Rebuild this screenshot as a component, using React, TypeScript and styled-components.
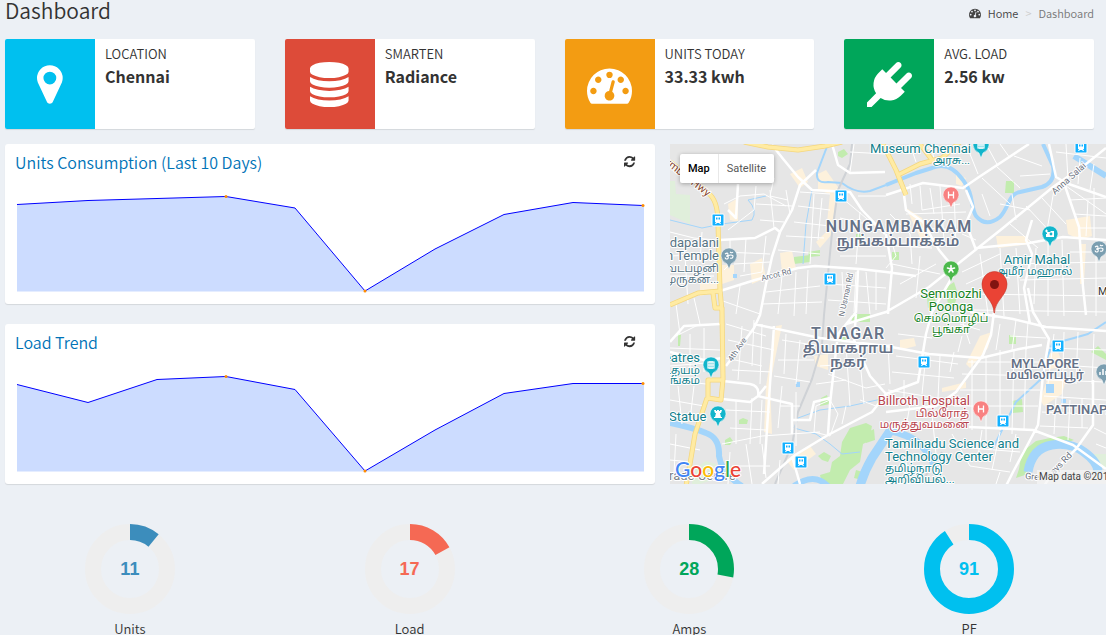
import React from 'react';
import styled, { createGlobalStyle } from 'styled-components';

const GlobalStyle = createGlobalStyle`
  *, *::before, *::after { box-sizing: border-box; }
  html { background: #ecf0f5; }
  body {
    margin: 0;
    background: #ecf0f5;
    color: #333;
    font-family: 'Noto Sans CJK SC', 'Open Sans', sans-serif;
    font-size: 13px;
    font-weight: 350;
    line-height: 20px;
    overflow-x: hidden;
  }
  h1, h2, p, ol, dl, dd { margin: 0; padding: 0; }
`;

const Page = styled.main`
  display: flex;
  flex-direction: column;
`;

const Header = styled.header`
  display: flex;
  justify-content: space-between;
  height: 39px;
  padding: 0 12px 0 5px;
`;

const Title = styled.h1`
  font-size: 21px;
  font-weight: 350;
  line-height: 20px;
`;

const Crumbs = styled.ol`
  display: flex;
  align-items: center;
  height: 26px;
  list-style: none;
  font-size: 11px;
  color: #777;
`;

const Crumb = styled.li`
  display: flex;
  align-items: center;
  & + &::before {
    content: '>';
    padding: 0 7px;
    color: #ccc;
  }
`;

const CrumbLink = styled.a`
  display: flex;
  align-items: center;
  gap: 7px;
  color: #444;
  text-decoration: none;
`;

const FourColumns = styled.section`
  display: grid;
  grid-template-columns: repeat(4, minmax(0, 1fr));
  gap: 30px;
  padding: 0 12px 0 5px;
`;

const InfoBox = styled.article`
  display: flex;
  min-height: 90px;
  background: #fff;
  border-radius: 2px;
  box-shadow: 0 1px 1px rgba(0, 0, 0, 0.1);
  overflow: hidden;
`;

const InfoIcon = styled.div<{ $color: string }>`
  display: flex;
  align-items: center;
  justify-content: center;
  flex: 0 0 90px;
  background: ${(p) => p.$color};
  color: #fff;
`;

const InfoBody = styled.div`
  padding: 5px 10px;
`;

const InfoLabel = styled.p`
  font-size: 13px;
  line-height: 20px;
  text-transform: uppercase;
`;

const InfoValue = styled.p`
  font-size: 16px;
  font-weight: 700;
  line-height: 25px;
`;

const Middle = styled.section`
  display: grid;
  grid-template-columns: minmax(0, 650fr) minmax(0, 436fr);
  gap: 15px;
  padding: 15px 0 0 5px;
`;

const Panels = styled.div`
  display: flex;
  flex-direction: column;
  gap: 20px;
`;

const Panel = styled.article`
  background: #fff;
  border-radius: 3px;
  box-shadow: 0 1px 1px rgba(0, 0, 0, 0.1);
  padding: 10px;
`;

const PanelHead = styled.div`
  display: flex;
  justify-content: space-between;
  align-items: flex-start;
  height: 18px;
`;

const PanelTitle = styled.h2`
  font-size: 16px;
  font-weight: 350;
  line-height: 16px;
  color: #0073b7;
`;

const RefreshButton = styled.button`
  display: flex;
  border: 0;
  padding: 2px 10px;
  background: none;
  color: #333;
  cursor: pointer;
`;

const Sparkline = styled.svg`
  display: block;
  width: 100%;
  height: 100px;
  margin-top: 22px;
`;

const MapFrame = styled.div`
  position: relative;
  min-height: 340px;
  background: #e5e5e5;
  overflow: hidden;
  font-family: Roboto, sans-serif;
`;

const MapDrawing = styled.svg`
  display: block;
  width: 100%;
  height: 340px;
  font-family: Roboto, 'Noto Sans Tamil', sans-serif;
`;

const MapSwitch = styled.div`
  position: absolute;
  top: 10px;
  left: 10px;
  display: flex;
  background: #fff;
  border-radius: 2px;
  box-shadow: 0 1px 4px rgba(0, 0, 0, 0.3);
`;

const MapButton = styled.button<{ $active?: boolean }>`
  height: 29px;
  padding: 0 8px;
  border: 0;
  border-right: ${(p) => (p.$active ? '1px solid #e8e8e8' : '0')};
  background: none;
  color: ${(p) => (p.$active ? '#000' : '#565656')};
  font-family: Roboto, sans-serif;
  font-size: 11px;
  font-weight: ${(p) => (p.$active ? 500 : 400)};
  cursor: pointer;
`;

const MapCredit = styled.div`
  position: absolute;
  left: 367px;
  bottom: 0;
  padding: 0 2px;
  background: rgba(245, 245, 245, 0.7);
  color: #444;
  font-size: 10px;
  font-weight: 400;
  line-height: 14px;
  white-space: nowrap;
`;

const Gauge = styled.figure`
  display: flex;
  flex-direction: column;
  align-items: center;
  gap: 9px;
  margin: 0;
  padding-top: 40px;
`;

const GaugeDial = styled.div<{ $color: string }>`
  display: grid;
  place-items: center;
  width: 90px;
  height: 90px;
  color: ${(p) => p.$color};
  & > * { grid-area: 1 / 1; }
`;

const GaugeValue = styled.span`
  font: bold 18px/20px 'Liberation Sans', Arial, sans-serif;
`;

const GaugeLabel = styled.figcaption`
  font-size: 13px;
  line-height: 12px;
`;

/* Icon outlines on a 1792-unit em */
const ICONS = {
  marker: {
    w: 1024,
    d: 'M768 640q0-106-75-181t-181-75-181 75-75 181 75 181 181 75 181-75 75-181zm256 0q0 109-33 179l-364 774q-16 33-47.5 52t-67.5 19-67.5-19-46.5-52l-365-774q-33-70-33-179 0-212 150-362t362-150 362 150 150 362z',
  },
  database: {
    w: 1536,
    d: 'M768 768q237 0 443-43t325-127v170q0 69-103 128t-280 93.5-385 34.5-385-34.5-280-93.5-103-128v-170q119 84 325 127t443 43zm0 768q237 0 443-43t325-127v170q0 69-103 128t-280 93.5-385 34.5-385-34.5-280-93.5-103-128v-170q119 84 325 127t443 43zm0-384q237 0 443-43t325-127v170q0 69-103 128t-280 93.5-385 34.5-385-34.5-280-93.5-103-128v-170q119 84 325 127t443 43zm0-1152q208 0 385 34.5t280 93.5 103 128v128q0 69-103 128t-280 93.5-385 34.5-385-34.5-280-93.5-103-128v-128q0-69 103-128t280-93.5 385-34.5z',
  },
  gauge: {
    w: 1792,
    d: 'M384 1152q0-53-37.5-90.5t-90.5-37.5-90.5 37.5-37.5 90.5 37.5 90.5 90.5 37.5 90.5-37.5 37.5-90.5zm192-448q0-53-37.5-90.5t-90.5-37.5-90.5 37.5-37.5 90.5 37.5 90.5 90.5 37.5 90.5-37.5 37.5-90.5zm428 481l101-382q6-26-7.5-48.5t-38.5-29.5-48 6.5-30 39.5l-101 382q-60 5-107 43.5t-63 98.5q-20 77 20 146t117 89 146-20 89-117q16-60-6-117t-72-91zm660-33q0-53-37.5-90.5t-90.5-37.5-90.5 37.5-37.5 90.5 37.5 90.5 90.5 37.5 90.5-37.5 37.5-90.5zm-640-640q0-53-37.5-90.5t-90.5-37.5-90.5 37.5-37.5 90.5 37.5 90.5 90.5 37.5 90.5-37.5 37.5-90.5zm448 192q0-53-37.5-90.5t-90.5-37.5-90.5 37.5-37.5 90.5 37.5 90.5 90.5 37.5 90.5-37.5 37.5-90.5zm320 448q0 261-141 483-19 29-54 29h-1402q-35 0-54-29-141-221-141-483 0-182 71-348t191-286 286-191 348-71 348 71 286 191 191 286 71 348z',
  },
  plug: {
    w: 1792,
    d: 'M1755 453q37 38 37 90.5t-37 90.5l-401 400 150 150-160 160q-163 163-389.5 186.5t-411.5-100.5l-362 362h-181v-181l362-362q-124-185-100.5-411.5t186.5-389.5l160-160 150 150 400-401q38-37 91-37t90 37 37 90.5-37 90.5l-400 401 234 234 401-400q38-37 91-37t90 37z',
  },
  refresh: {
    w: 1536,
    d: 'M1511 928q0 5-1 7-64 268-268 434.5t-478 166.5q-146 0-282.5-55t-243.5-157l-129 129q-19 19-45 19t-45-19-19-45v-448q0-26 19-45t45-19h448q26 0 45 19t19 45-19 45l-137 137q71 66 161 102t187 36q134 0 250-65t186-179q11-17 53-117 8-23 30-23h192q13 0 22.5 9.5t9.5 22.5zm25-800v448q0 26-19 45t-45 19h-448q-26 0-45-19t-19-45 19-45l138-138q-148-137-349-137-134 0-250 65t-186 179q-11 17-53 117-8 23-30 23h-199q-13 0-22.5-9.5t-9.5-22.5v-7q65-268 270-434.5t480-166.5q146 0 284 55.5t245 156.5l130-129q19-19 45-19t45 19 19 45z',
  },
};

type IconName = keyof typeof ICONS;

function Icon({ name, size }: { name: IconName; size: number }) {
  const icon = ICONS[name];
  return (
    <svg
      height={size}
      width={(size * icon.w) / 1792}
      viewBox={`0 0 ${icon.w} 1792`}
      fill="currentColor"
      overflow="visible"
      aria-hidden="true"
    >
      <path d={icon.d} />
    </svg>
  );
}

const INFO: { icon: IconName; color: string; label: string; value: string }[] = [
  { icon: 'marker', color: '#00c0ef', label: 'Location', value: 'Chennai' },
  { icon: 'database', color: '#dd4b39', label: 'Smarten', value: 'Radiance' },
  { icon: 'gauge', color: '#f39c12', label: 'Units Today', value: '33.33 kwh' },
  { icon: 'plug', color: '#00a65a', label: 'Avg. Load', value: '2.56 kw' },
];

type Point = [number, number];

const CHARTS: { title: string; points: Point[] }[] = [
  {
    title: 'Units Consumption (Last 10 Days)',
    points: [[2, 10.5], [73, 6.5], [142, 4.5], [211, 2.5], [280, 14], [350, 97], [420, 55], [489, 20.5], [558, 8.5], [628, 11.5]],
  },
  {
    title: 'Load Trend',
    points: [[2, 10.5], [73, 28.5], [142, 5.5], [211, 2.5], [280, 15.5], [350, 97], [420, 56], [489, 19.5], [558, 9.5], [628, 9.5]],
  },
];

const GAUGES = [
  { value: 11, label: 'Units', color: '#3c8dbc' },
  { value: 17, label: 'Load', color: '#f56954' },
  { value: 28, label: 'Amps', color: '#00a65a' },
  { value: 91, label: 'PF', color: '#00c0ef' },
];

function Chart({ title, points }: { title: string; points: Point[] }) {
  const line = points.map((p) => p.join(',')).join(' ');
  const spots = [points[3], points[5], points[9]];
  return (
    <Sparkline viewBox="0 0 630 100" preserveAspectRatio="none" role="img" aria-label={title}>
      <polygon points={`${line} 629,11 629,97.5 2,97.5`} fill="#ccdcff" />
      <polyline points={line} fill="none" stroke="#00f" strokeWidth="1" vectorEffect="non-scaling-stroke" />
      {spots.map(([x, y]) => (
        <circle key={x} cx={x} cy={y} r="1.5" fill="#ff8c00" />
      ))}
    </Sparkline>
  );
}

/* ---- Map artwork, in map pixels ---- */

const PARKS = [
  'M180 284L196 279L202 282L199 297L193 300L190 318L180 326L173 340H152L150 331L160 328L162 318L170 312L172 298Z',
  'M194 290L204 285L205 296L196 299Z', 'M186 326L196 329L192 336L184 334Z',
  'M148 312L154 308L161 312L158 318L152 316Z', 'M69 276L73 274L78 276L77 280H69Z',
  'M55 296L60 293L63 297L60 301H55Z', 'M151 254L157 251L160 260L150 262Z',
  'M124 113L140 111V118L124 120Z', 'M138 108L150 106V112L139 113Z', 'M168 8L174 5L178 10L172 14L168 12Z',
  'M336 37H344V49H335Z', 'M275 144L284 138L288 150L284 162L278 160Z', 'M257 154L264 150L266 160L258 164Z',
  'M339 191L346 192V200L339 200Z', 'M421 208L428 202L436 210V216Z', 'M342 257L352 255L353 268L342 269Z',
  'M349 325L352 308L366 297L380 294L394 292L404 296L395 299L380 298L368 303L360 316L358 330L346 334Z',
  'M182 170H200V178H182Z', 'M222 108H229V116H222Z', 'M8 190L11 191L10 202H8Z', 'M186 90H193V98H186Z', 'M170 193H178V198H170Z',
];
const PALE_PARKS = ['M0 37H5L6 50L20 51V80L0 71Z', 'M22 326L36 317L46 320V335L30 340H22Z', 'M417 310H436V325L420 320Z'];

const PEACH = [
  'M52 121H64V136L52 140Z', 'M80 120L92 114L96 134L82 140Z', 'M110 109L122 107L126 124L112 128Z', 'M30 138H48V148L30 152Z',
  'M148 30L156 26L170 46L160 50L148 46Z', 'M160 50L166 48L162 90L150 104L146 98L156 88Z', 'M120 30L132 24L138 38L130 44Z',
  'M106 182L112 181L106 210L100 240L102 290L94 288L96 242Z', 'M144 212L158 210V226L146 222Z', 'M116 316L140 302L146 310L124 326Z',
  'M396 76L420 72L422 92L410 96L398 90Z', 'M326 92H356L360 100L328 104Z', 'M236 64L252 74L262 100L254 102Z',
  'M272 244L296 238V244L272 248Z', 'M378 234L396 236L392 250L374 262L370 256Z', 'M230 196L244 194L246 202L230 206Z',
  'M310 192L322 188L318 204L300 224L296 220Z', 'M376 210L388 208L394 222L376 226Z', 'M58 60L68 54L68 78L60 76Z',
  'M286 30L296 34L292 42L286 40Z', 'M410 100L416 100L414 140L410 140Z',
];

const RIVERS = [
  { w: 4, d: 'M216 41L246 29L262 24C276 18 286 26 293 36C304 50 300 62 306 72Q316 84 330 73C340 62 338 50 350 48L372 43Q386 38 383 22L373 0' },
  { w: 2, d: 'M158 0L147 29Q146 40 158 38L172 39Q186 50 200 47L216 41' },
  { w: 6, d: 'M0 279Q24 284 36 289Q50 294 49 312Q52 330 72 342' },
  { w: 9, d: 'M222 284Q210 302 202 314Q194 328 190 342' },
  { w: 7, d: 'M216 286Q240 290 252 302T266 330' },
  { w: 6, d: 'M124 342Q144 328 158 342' },
  { w: 9, d: 'M358 328Q362 304 382 301Q400 298 414 308T428 328' },
  { w: 6, d: 'M404 12L436 32' },
  { w: 1, d: 'M0 76L32 84L52 80L82 76Q88 66 78 56L96 52' },
  { w: 1, d: 'M142 46L136 80L133 120' },
  { w: 2, d: 'M436 178L418 190L404 194L382 200L370 236L346 258L332 286L322 306' },
  { w: 1, d: 'M216 254L180 262L150 266L128 274L124 284L146 290L160 300L172 310L190 308' },
];

const MINOR = [
  'M54 60L70 52L94 50L116 62', 'M58 86L84 66L86 42', 'M60 96V120L54 126', 'M76 94L74 128', 'M96 92L92 128L70 132',
  'M54 108L100 110', 'M64 120L100 118', 'M100 46L104 84', 'M116 46L120 70', 'M86 60L122 62', 'M90 76L114 78', 'M104 34L100 52L118 56',
  'M130 48L160 50', 'M128 62L160 66', 'M124 78L160 82', 'M116 92L154 94', 'M108 106L150 110', 'M144 50L140 120', 'M152 54L148 96',
  'M50 156L90 170', 'M70 142L66 170', 'M96 148L150 142', 'M92 160L152 158', 'M112 132L108 170', 'M126 128L124 172', 'M138 126L136 170',
  'M172 54L208 84', 'M170 74L196 80', 'M166 96L216 102', 'M170 112L216 112', 'M172 128L174 168', 'M186 128L184 168', 'M196 128L200 170',
  'M160 140L216 144', 'M158 156L216 160', 'M206 126V166', 'M190 68L186 120', 'M180 8L216 10', 'M184 0L180 28', 'M188 52L216 52',
  'M0 88L24 94L46 96', 'M14 96L18 160', 'M0 112L46 110', 'M32 88L30 118', 'M0 132L44 132', 'M6 160L10 190', 'M24 154L30 180L6 192',
  'M0 204L50 206', 'M20 190V230', 'M34 184V228', 'M0 236L36 240', 'M0 222L48 218', 'M8 242L12 280', 'M0 256L34 262', 'M24 242L20 276',
  'M56 180L96 192', 'M58 196L104 206', 'M56 214L92 222', 'M62 226L102 228', 'M72 182L68 236', 'M84 176L82 222', 'M92 180L90 240',
  'M56 266L100 268', 'M60 284L96 286', 'M66 256V300', 'M82 254L80 300', 'M92 256L90 300', 'M52 300L92 292L150 288',
  'M112 196L150 202', 'M108 216L144 216', 'M104 232L140 238', 'M116 190L114 230', 'M130 196L126 240', 'M112 242L108 284', 'M126 248V302',
  'M110 262L130 262', 'M146 240L176 236', 'M158 230L196 244L215 240', 'M150 222L180 220', 'M176 200L180 262', 'M190 216L194 260',
  'M146 262L144 288L160 292L168 270L160 256L146 262', 'M176 262L172 280', 'M190 256L206 262', 'M60 308L58 340', 'M76 300L82 340',
  'M92 300L96 334', 'M62 322L100 322', 'M110 316L108 340', 'M0 300L30 306', 'M6 290L4 330', 'M0 316L22 318',
  'M240 40L242 60', 'M250 42L252 66L290 60', 'M260 44L264 70', 'M270 42L274 96', 'M236 70L296 68', 'M248 84L296 86', 'M220 70L240 90L242 120',
  'M216 80L226 112L216 124', 'M226 102L262 104', 'M222 120L270 130', 'M230 140L266 120', 'M250 112L246 154', 'M284 48L286 100', 'M292 90L306 96',
  'M240 0L246 18', 'M260 0L264 14', 'M226 6L260 4', 'M296 0L308 30', 'M316 0L328 22', 'M330 0L340 14', 'M312 34L340 60', 'M326 22L350 44',
  'M344 12L372 22', 'M350 32L380 30', 'M312 50L320 72', 'M330 60L360 66', 'M342 50L346 76', 'M340 80L368 104', 'M356 62L384 92',
  'M372 54L396 80', 'M384 46L376 92', 'M396 42L436 70', 'M400 56L436 54', 'M404 70L436 72', 'M408 84L436 84', 'M424 44V96', 'M418 56L416 92',
  'M386 8L436 14', 'M396 0L398 36', 'M410 14L408 40', 'M424 20L420 46', 'M292 128L330 110', 'M296 140L318 130L340 134',
  'M310 110L318 170', 'M330 104L334 172', 'M346 104L350 170', 'M378 96V172', 'M392 96L394 172', 'M426 98V172', 'M302 150L436 152',
  'M340 120L436 118', 'M350 136L436 134', 'M304 166L436 168', 'M400 108L436 108', 'M366 104L364 160', 'M290 170L300 200',
  'M218 200L220 240', 'M228 190L262 194', 'M226 212L288 220', 'M222 228L284 234', 'M256 210L252 250', 'M270 212L268 254', 'M284 208L280 228',
  'M218 246L280 256', 'M234 236V262', 'M290 180L310 186', 'M292 192L288 208', 'M292 230L370 232', 'M298 218L372 218', 'M290 246L370 246',
  'M284 262L368 262', 'M302 216V286', 'M316 212V300', 'M330 206V286', 'M344 206L342 290', 'M356 204L354 286', 'M330 180L326 206',
  'M346 176L342 206', 'M358 178L356 206', 'M340 192L376 194', 'M384 190L378 240', 'M394 188L392 260', 'M408 188L406 240', 'M424 190L422 240',
  'M378 204L436 206', 'M376 220L436 224', 'M376 236L436 238', 'M374 252L436 256', 'M372 268L422 270', 'M370 282L418 284', 'M386 254L384 290',
  'M400 256L398 296', 'M412 254V284', 'M282 290L300 322L340 328', 'M312 286L308 312', 'M330 288L322 326', 'M346 290L340 318', 'M300 304L350 308',
  'M240 260L236 284', 'M262 270L266 310', 'M424 284L436 290', 'M426 300L436 304', 'M270 322L266 340', 'M236 318L240 340', 'M330 328L326 340',
];

const MAJOR = [
  'M102 1L114 16L128 33L142 46L180 48L192 66L215 90',
  'M146 26L130 41L122 66L110 88L102 113L96 140L90 171L84 184L56 222',
  'M50 96L85 94L105 84L110 88',
  'M50 147L85 136L128 124L145 122L190 125L216 128L246 132',
  'M162 0L168 21L180 29L215 28',
  'M436 4L416 20L383 43L333 84L289 119L259 143L216 168L176 180',
  'M92 340L125 311L158 291L202 268L216 250L248 238L256 190L262 168L284 130',
  'M0 198L14 182L50 180', 'M84 180L150 194L216 202L259 210L311 214L349 205L372 201',
  'M324 168L321 191L313 211L286 248L266 262L216 268',
  'M358 144L363 168L379 195L373 231L368 281L359 298L343 328L336 342',
  'M300 168L343 175L376 183L436 187', 'M299 283L363 286L403 301L436 325', 'M423 236V281L406 305L383 328L374 342',
  'M234 51L236 66L253 78L269 106L283 123', 'M216 51L253 39L293 44L309 33L359 0',
  'M379 0L386 33L396 39L436 53', 'M296 46L303 63L296 79L306 106', 'M306 104L359 99L393 93L436 96',
  'M362 76L356 96L362 110L354 144L360 180', 'M394 39L409 83L413 143L416 171',
  'M53 237L80 240Q90 242 88 252L80 258L52 255', 'M96 242L88 252L122 260L122 290', 'M122 276L140 276L144 258L160 254',
  'M54 214L34 216L0 208', 'M188 126L186 168L168 190L164 224L160 260L158 290', 'M186 170L184 196L200 232L216 250',
  'M58 66L66 74L68 40', 'M122 312L130 340', 'M216 90L222 124L218 170', 'M104 182L100 240L94 330',
];

const RAIL = ['M182 0L180 20L168 46L162 89L154 171L152 201L142 235L128 268L122 301L105 340', 'M272 308L250 340'];

const HIGHWAYS = [
  'M0 18L16 30L38 49Q48 56 48 79L50 146L52 168L53 235L51 256L38 254V236H53', 'M37 254L25 290L20 320L16 342',
  'M0 161L28 149L50 147', 'M43 149L45 164H52V180', 'M74 -2L98 3L128 6L155 2L172 -2',
  'M211 -4L226 26L236 51', 'M228 31L250 20L272 14L290 -2', 'M250 0L262 16',
];

const TRAINS: Point[] = [[48, 76], [171, 52], [160, 135], [254, 218], [388, 202], [333, 277], [118, 304], [131, 318], [411, 3]];

type PinKind = 'om' | 'camera' | 'cinema' | 'tower' | 'hospital' | 'flower' | 'bars';
const PINS: { x: number; y: number; color: string; kind: PinKind }[] = [
  { x: 59, y: 112, color: '#7b9eb0', kind: 'om' },
  { x: 429, y: 105, color: '#7b9eb0', kind: 'om' },
  { x: 380, y: 90, color: '#12b5cb', kind: 'camera' },
  { x: 311, y: 1, color: '#12b5cb', kind: 'cinema' },
  { x: 41, y: 221, color: '#12b5cb', kind: 'cinema' },
  { x: 48, y: 270, color: '#12b5cb', kind: 'tower' },
  { x: 281, y: 51, color: '#f88181', kind: 'hospital' },
  { x: 311, y: 265, color: '#f88181', kind: 'hospital' },
  { x: 281, y: 125, color: '#4bb84b', kind: 'flower' },
  { x: 434, y: 228, color: '#7b9eb0', kind: 'bars' },
];

function PinSymbol({ kind }: { kind: PinKind }) {
  switch (kind) {
    case 'camera':
      return <g><path d="M-3 -2H0L1 -3H4V3H-4V0H-3Z" fill="#fff" /><circle cx="1" cy="0" r="1.4" fill="#12b5cb" /><path d="M-5 -3H-2M-3.500 -4.500V-1.500" stroke="#fff" strokeWidth="1" /></g>;
    case 'cinema':
      return <g stroke="#fff" strokeWidth="1.200" fill="none"><rect x="-3" y="-3" width="6" height="6" /><path d="M-1 -4V4M1 -4V4M-3 0H3" /></g>;
    case 'tower':
      return <path d="M-4 -4H-2V-3H-1V-4H1V-3H2V-4H4L3 -1H2L3 3H4V4H-4V3H-3L-2 -1H-3Z" fill="#fff" />;
    case 'hospital':
      return <path d="M-2.500 -3.500V3.500M2.500 -3.500V3.500M-2.500 0H2.500" stroke="#fff" strokeWidth="1.300" />;
    case 'flower':
      return <g stroke="#fff" strokeWidth="1.600" strokeLinecap="round"><path d="M0 0V-3.500M0 0L3.500 -1M0 0L2 3M0 0L-2 3M0 0L-3.500 -1" /></g>;
    case 'bars':
      return <path d="M-4 3V0M-1 3V-3M2 3V-1" stroke="#fff" strokeWidth="1.500" />;
    default:
      return <path d="M-4 -2Q-1 -4 -1 -1.500Q-1 0 -3 0Q0 0 -1 2.500Q-3 4 -4 1.500M-1 0Q2 -2 4 0Q4 3 1 2M1 -4Q3 -2.500 4 -4" fill="none" stroke="#fff" strokeWidth="1.100" />;
  }
}

type LabelSpec = {
  x: number;
  y: number;
  text: string;
  size: number;
  color: string;
  anchor?: 'start' | 'middle' | 'end';
  bold?: boolean;
  spaced?: boolean;
  turn?: number;
};

const TEAL = '#12808c';
const SLATE = '#667287';
const ROAD = '#6b7280';
const TEMPLE = '#587484';
const GREEN = '#16831f';
const ROSE = '#b8454f';

const LABELS: LabelSpec[] = [
  { x: 301, y: 9, text: 'Museum Chennai', size: 13, color: TEAL, anchor: 'end' },
  { x: 300, y: 20, text: 'அரசு...', size: 11, color: TEAL, anchor: 'end' },
  { x: 229, y: 88, text: 'NUNGAMBAKKAM', size: 16, color: SLATE, anchor: 'middle', bold: true, spaced: true },
  { x: 228, y: 102, text: 'நுங்கம்பாக்கம்', size: 15, color: SLATE, anchor: 'middle', bold: true },
  { x: 49, y: 103, text: 'Vadapalani', size: 13, color: TEMPLE, anchor: 'end' },
  { x: 49, y: 116, text: 'Murugan Temple', size: 13, color: TEMPLE, anchor: 'end' },
  { x: 49, y: 128, text: 'வடபழனி', size: 11, color: TEMPLE, anchor: 'end' },
  { x: 49, y: 139, text: 'முருகன்...', size: 11, color: TEMPLE, anchor: 'end' },
  { x: 367, y: 120, text: 'Amir Mahal', size: 13, color: TEAL, anchor: 'middle' },
  { x: 364, y: 131, text: 'அமீர் மஹால்', size: 11, color: TEAL, anchor: 'middle' },
  { x: 281, y: 154, text: 'Semmozhi', size: 13, color: GREEN, anchor: 'middle' },
  { x: 281, y: 167, text: 'Poonga', size: 13, color: GREEN, anchor: 'middle' },
  { x: 281, y: 178, text: 'செம்மொழிப்', size: 11, color: GREEN, anchor: 'middle' },
  { x: 281, y: 189, text: 'பூங்கா', size: 11, color: GREEN, anchor: 'middle' },
  { x: 178, y: 195, text: 'T NAGAR', size: 16, color: SLATE, anchor: 'middle', bold: true, spaced: true },
  { x: 178, y: 209, text: 'தியாகராய', size: 15, color: SLATE, anchor: 'middle', bold: true },
  { x: 178, y: 223, text: 'நகர்', size: 15, color: SLATE, anchor: 'middle', bold: true },
  { x: 30, y: 218, text: 'Theatres', size: 13, color: TEAL, anchor: 'end' },
  { x: 30, y: 230, text: 'உதயம்', size: 11, color: TEAL, anchor: 'end' },
  { x: 30, y: 240, text: 'அரங்கம்', size: 11, color: TEAL, anchor: 'end' },
  { x: -1, y: 277, text: 'Statue', size: 13, color: TEAL },
  { x: 375, y: 224, text: 'MYLAPORE', size: 13, color: SLATE, anchor: 'middle', bold: true },
  { x: 375, y: 235, text: 'மயிலாப்பூர்', size: 12, color: SLATE, anchor: 'middle', bold: true },
  { x: 376, y: 270, text: 'PATTINAPAKKAM', size: 13, color: SLATE, bold: true },
  { x: 300, y: 261, text: 'Billroth Hospital', size: 13, color: ROSE, anchor: 'end' },
  { x: 299, y: 273, text: 'பில்ரோத்', size: 11, color: ROSE, anchor: 'end' },
  { x: 299, y: 284, text: 'மருத்துவமனை', size: 11, color: ROSE, anchor: 'end' },
  { x: 215, y: 304, text: 'Tamilnadu Science and', size: 13, color: TEAL },
  { x: 215, y: 317, text: 'Technology Center', size: 13, color: TEAL },
  { x: 215, y: 328, text: 'தமிழ்நாடு', size: 11, color: TEAL },
  { x: 215, y: 339, text: 'அறிவியல்...', size: 11, color: TEAL },
  { x: -1, y: 336, text: 'rade Centre', size: 13, color: '#7c8288' },
  { x: 428, y: 151, text: 'Marina', size: 11, color: '#333' },
  { x: 92, y: 137, text: 'Arcot Rd', size: 8, color: ROAD, turn: -14 },
  { x: 174, y: 173, text: 'N Usman Rd', size: 8, color: ROAD, turn: -78 },
  { x: 62, y: 218, text: '4th Ave', size: 8, color: ROAD, turn: -56 },
  { x: 385, y: 51, text: 'Anna Salai', size: 9, color: ROAD, turn: -42 },
  { x: 355, y: 335, text: 'Gre', size: 9, color: ROAD, turn: 4 },
  { x: 384, y: 331, text: 'ays Rd', size: 9, color: ROAD, turn: -46 },
  { x: -5, y: 20, text: 'rmbur Hwy', size: 11, color: '#8a4b32', turn: 38 },
];

function MapLabel({ x, y, text, size, color, anchor, bold, spaced, turn }: LabelSpec) {
  return (
    <text
      x={x}
      y={y}
      fontSize={size}
      fill={color}
      textAnchor={anchor}
      fontWeight={bold ? 600 : 400}
      letterSpacing={spaced ? 1 : undefined}
      transform={turn ? `rotate(${turn} ${x} ${y})` : undefined}
      stroke="#fff"
      strokeWidth="2"
      strokeLinejoin="round"
      paintOrder="stroke"
    >
      {text}
    </text>
  );
}

function CityMap() {
  return (
    <MapDrawing viewBox="0 0 436 340" preserveAspectRatio="xMinYMin slice" role="img" aria-label="Map of Chennai">
      <rect width="436" height="340" fill="#e6e6e6" />
      <path d={PALE_PARKS.join('')} fill="#e0efdb" />
      <path d={PARKS.join('')} fill="#c2ecae" />
      <path d={PEACH.join('')} fill="#fdf1dc" />
      <path d="M376 240H384V249H376Z M391 255H396V259H391Z M63 130H67V134H63Z M126 238H130V243H126Z" fill="#a5d6fc" />
      <g fill="none" strokeLinejoin="round">
        {RIVERS.map((r) => <path key={r.d} d={r.d} stroke="#a3d5fb" strokeWidth={r.w} />)}
        <path d={RAIL.join('')} stroke="#cfd2d6" strokeWidth="2" />
        <path d={MINOR.join('')} stroke="#fff" strokeWidth="1" />
        <path d={MAJOR.join('')} stroke="#fff" strokeWidth="2.500" />
        <path d={HIGHWAYS.join('')} stroke="#f5d77d" strokeWidth="5" />
        <path d={HIGHWAYS.join('')} stroke="#ffeba3" strokeWidth="3.500" />
      </g>
      {TRAINS.map(([x, y]) => (
        <g key={`${x}-${y}`} transform={`translate(${x} ${y})`}>
          <rect x="-6" y="-6" width="12" height="12" rx="1" fill="#14b1ff" stroke="#fff" strokeWidth="1" />
          <path d="M-3 -4H3V2H2L3 4H2L1 3H-1L-2 4H-3L-2 2H-3Z" fill="#fff" />
          <path d="M-2 -2.500H-.5V-.5H-2ZM.5 -2.500H2V-.5H.5Z" fill="#14b1ff" />
        </g>
      ))}
      {LABELS.map((l) => <MapLabel key={l.text} {...l} />)}
      {PINS.map((p) => (
        <g key={`${p.x}-${p.y}`} transform={`translate(${p.x} ${p.y})`}>
          <path d="M0 13L-2 8Q-8 5 -8 0A8 8 0 0 1 8 0Q8 5 2 8Z" fill={p.color} stroke="#fff" strokeWidth=".5" />
          <PinSymbol kind={p.kind} />
        </g>
      ))}
      <path d="M324 169C324 156 312 152 312 140A12.500 12.500 0 0 1 337 140C337 152 325 156 324.500 169Z" fill="#ea4335" stroke="#c5352a" strokeWidth=".6" />
      <circle cx="324.500" cy="140.500" r="4.500" fill="#811411" />
      <text x="5" y="333" fontFamily="Lato, sans-serif" fontSize="21" fontWeight="500" stroke="#fff" strokeWidth="2" paintOrder="stroke">
        <tspan fill="#4285f4">G</tspan>
        <tspan fill="#ea4335">o</tspan>
        <tspan fill="#fbbc05">o</tspan>
        <tspan fill="#4285f4">g</tspan>
        <tspan fill="#34a853">l</tspan>
        <tspan fill="#ea4335">e</tspan>
      </text>
    </MapDrawing>
  );
}

export default function App() {
  return (
    <Page>
      <GlobalStyle />
      <Header>
        <Title>Dashboard</Title>
        <nav aria-label="Breadcrumb">
          <Crumbs>
            <Crumb>
              <CrumbLink href="#home">
                <Icon name="gauge" size={12} />
                Home
              </CrumbLink>
            </Crumb>
            <Crumb>Dashboard</Crumb>
          </Crumbs>
        </nav>
      </Header>

      <FourColumns>
        {INFO.map((item) => (
          <InfoBox key={item.label}>
            <InfoIcon $color={item.color}>
              <Icon name={item.icon} size={45} />
            </InfoIcon>
            <InfoBody>
              <InfoLabel>{item.label}</InfoLabel>
              <InfoValue>{item.value}</InfoValue>
            </InfoBody>
          </InfoBox>
        ))}
      </FourColumns>

      <Middle>
        <Panels>
          {CHARTS.map((chart) => (
            <Panel key={chart.title}>
              <PanelHead>
                <PanelTitle>{chart.title}</PanelTitle>
                <RefreshButton type="button" aria-label={`Refresh ${chart.title}`}>
                  <Icon name="refresh" size={13} />
                </RefreshButton>
              </PanelHead>
              <Chart title={chart.title} points={chart.points} />
            </Panel>
          ))}
        </Panels>
        <MapFrame>
          <CityMap />
          <MapSwitch>
            <MapButton type="button" $active>Map</MapButton>
            <MapButton type="button">Satellite</MapButton>
          </MapSwitch>
          <MapCredit>Map data ©2018 Google</MapCredit>
        </MapFrame>
      </Middle>

      <FourColumns>
        {GAUGES.map((g) => (
          <Gauge key={g.label}>
            <GaugeDial $color={g.color}>
              <svg width="90" height="90" viewBox="0 0 90 90" fill="none" strokeWidth="16" aria-hidden="true">
                <circle cx="45" cy="45" r="37" stroke="#eee" />
                <circle
                  cx="45"
                  cy="45"
                  r="37"
                  stroke="currentColor"
                  pathLength={100}
                  strokeDasharray={`${g.value} 100`}
                  transform="rotate(-90 45 45)"
                />
              </svg>
              <GaugeValue>{g.value}</GaugeValue>
            </GaugeDial>
            <GaugeLabel>{g.label}</GaugeLabel>
          </Gauge>
        ))}
      </FourColumns>
    </Page>
  );
}
